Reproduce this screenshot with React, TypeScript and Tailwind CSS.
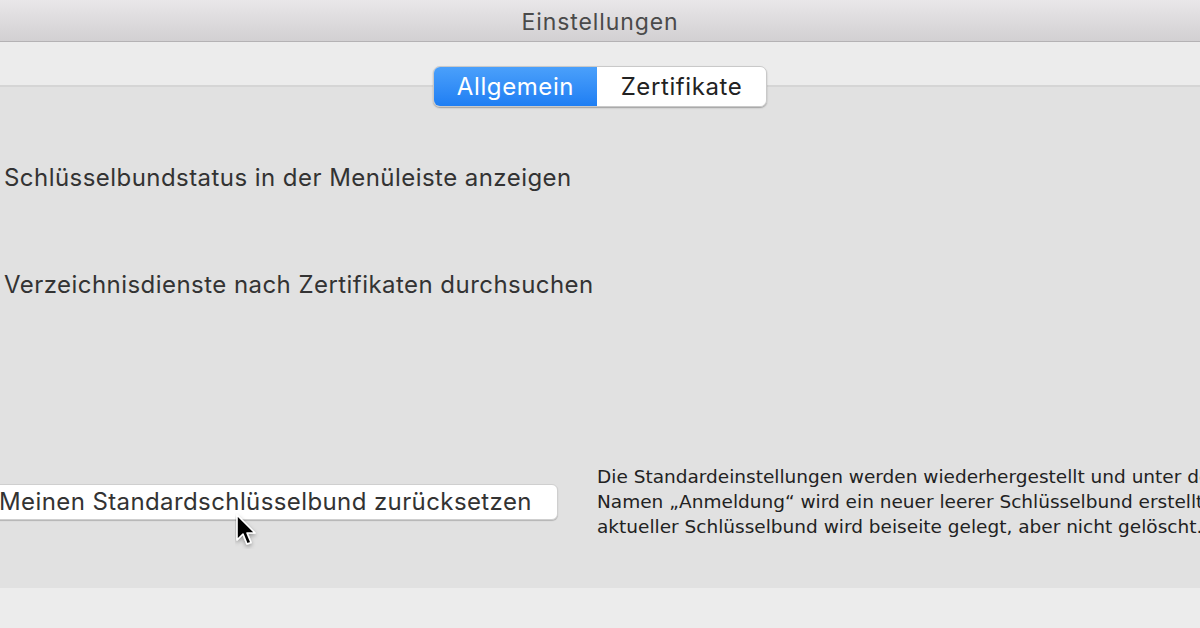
export default function App() {
	const sf = { fontFamily: '"Inter", "Noto Sans", sans-serif' };

	return (
		<div className="relative w-[1200px] h-[628px] overflow-hidden flex flex-col bg-[#e1e1e1] text-[#333]" style={sf}>
			{/* Title bar */}
			<div className="h-[42px] shrink-0 flex items-center justify-center pt-[3px] bg-gradient-to-b from-[#e9e7e9] to-[#d2d0d2] border-b border-[#b4b2b4]">
				<span className="text-[23px] text-[#4a4a4a] tracking-[0.9px]">Einstellungen</span>
			</div>

			{/* Toolbar with tabs */}
			<div className="h-[45px] shrink-0 bg-[#ececec] border-b-[2px] border-[#d5d5d5] flex justify-center pt-[24px] relative z-10">
				<div className="flex h-[41px] rounded-[7px] shadow-[0_1px_1.5px_rgba(0,0,0,0.3)] border border-[#c9c9c9] overflow-hidden">
					<div className="w-[163px] flex items-center justify-center bg-gradient-to-b from-[#4aa0fb] to-[#1e7ef3] text-white text-[24px] tracking-[0.6px]">
						Allgemein
					</div>
					<div className="w-[169px] flex items-center justify-center bg-white text-[#222] text-[24px] tracking-[0.6px]">
						Zertifikate
					</div>
				</div>
			</div>

			{/* Content */}
			<div className="flex-1 flex flex-col pl-[4px] pt-[76px]">
				<div className="text-[24px] leading-[30px] tracking-[0.45px] text-[#333]">Schlüsselbundstatus in der Menüleiste anzeigen</div>
				<div className="text-[24px] leading-[30px] tracking-[0.45px] text-[#333] mt-[77px]">Verzeichnisdienste nach Zertifikaten durchsuchen</div>

				<div className="flex items-start mt-[164px]">
					<div className="shrink-0 -ml-[20px] mt-[20px] w-[574px] h-[36px] bg-white rounded-[6px] border border-[#cfcfcf] shadow-[0_1px_1px_rgba(0,0,0,0.2)] flex items-center pl-[14px] text-[24px] tracking-[0.4px] text-[#333] whitespace-nowrap">
						Meinen Standardschlüsselbund zurücksetzen
					</div>
					<div
						className="shrink-0 ml-[39px] text-[18.5px] leading-[25px] text-[#222] whitespace-nowrap"
						style={{ fontFamily: '"DejaVu Sans", "Liberation Sans", sans-serif' }}
					>
						<div>Die Standardeinstellungen werden wiederhergestellt und unter dem</div>
						<div>Namen „Anmeldung“ wird ein neuer leerer Schlüsselbund erstellt. Ihr</div>
						<div>aktueller Schlüsselbund wird beiseite gelegt, aber nicht gelöscht.</div>
					</div>
				</div>
			</div>

			{/* Bottom bar */}
			<div className="h-[40px] shrink-0 bg-[#ececec]" />

			{/* Mouse cursor */}
			<svg className="absolute left-[235px] top-[513px]" width="26" height="36" viewBox="0 0 26 36">
				<defs>
					<filter id="sh" x="-50%" y="-50%" width="200%" height="200%">
						<feDropShadow dx="0" dy="2" stdDeviation="2" floodColor="#000" floodOpacity="0.35" />
					</filter>
				</defs>
				<path d="M2 2 L2 27 L8 21 L12 31 L16 29.5 L12 20 L20 20 Z" fill="#000" stroke="#fff" strokeWidth="1.6" strokeLinejoin="round" filter="url(#sh)" />
			</svg>
		</div>
	);
}
